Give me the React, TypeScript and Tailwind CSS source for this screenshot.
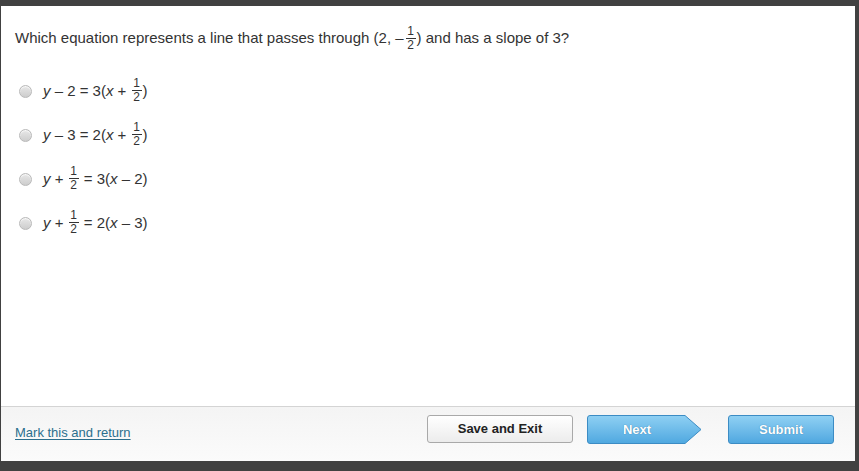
import React from "react";

const Frac: React.FC<{ neg?: boolean }> = ({ neg }) => (
  <span className="inline-flex items-center align-middle">
    {neg && <span className="mr-[1px]">–</span>}
    <span className="inline-flex flex-col items-center text-[12px] leading-[11px] -mt-[1px] mx-[1px]">
      <span className="px-[1px]">1</span>
      <span className="block w-[10px] border-t border-[#333] my-[1px]" />
      <span className="px-[1px]">2</span>
    </span>
  </span>
);

const Radio = () => (
  <span className="shrink-0 inline-block w-[13px] h-[13px] rounded-full border border-[#b9b9b9] bg-gradient-to-b from-[#e8e8e8] to-[#cdcdcd] shadow-[inset_0_1px_1px_rgba(255,255,255,0.8)]" />
);

const Option: React.FC<{ children: React.ReactNode }> = ({ children }) => (
  <div className="flex items-center h-[44px]">
    <div className="shrink-0 w-[42px] pl-[18px] flex items-center">
      <Radio />
    </div>
    <div className="flex items-center whitespace-pre">{children}</div>
  </div>
);

const I: React.FC<{ children: React.ReactNode }> = ({ children }) => (
  <i className="italic">{children}</i>
);

export default function App() {
  return (
    <div
      className="w-[859px] h-[471px] bg-[#414141] pt-[6px] pl-[1px] pr-[4px] pb-[10px] flex"
      style={{ fontFamily: '"Liberation Sans", Arial, sans-serif' }}
    >
      <div className="flex-1 bg-white flex flex-col text-[#333] text-[15px]">
        {/* QUESTION */}
        <div className="flex-1">
          <div className="pl-[14px] pt-[19px] h-[46px] flex items-center whitespace-pre">
            Which equation represents a line that passes through (2, <Frac neg />) and has a slope of 3?
          </div>
          <div className="mt-[17px]">
            <Option>
              <I>y</I> – 2 = 3(<I>x</I> + <Frac />)
            </Option>
            <Option>
              <I>y</I> – 3 = 2(<I>x</I> + <Frac />)
            </Option>
            <Option>
              <I>y</I> + <Frac /> = 3(<I>x</I> – 2)
            </Option>
            <Option>
              <I>y</I> + <Frac /> = 2(<I>x</I> – 3)
            </Option>
          </div>
        </div>

        {/* FOOTER */}
        <div className="h-[55px] border-t border-[#d4d4d4] bg-gradient-to-b from-[#f4f4f4] to-[#fbfbfb] flex items-start pt-[8px] pl-[14px] pr-[21px]">
          <a
            href="#"
            className="mt-[8px] text-[13px] text-[#2b6f8d] underline underline-offset-2"
          >
            Mark this and return
          </a>
          <div className="ml-auto flex items-start">
            <button className="w-[146px] h-[28px] rounded-[3px] border border-[#a9a9a9] bg-gradient-to-b from-[#ffffff] to-[#ececec] text-[13px] font-bold text-[#222]">
              Save and Exit
            </button>
            <div className="relative w-[115px] h-[29px] ml-[14px]">
              <svg className="absolute inset-0" width="115" height="29" viewBox="0 0 115 29">
                <defs>
                  <linearGradient id="nb" x1="0" y1="0" x2="0" y2="1">
                    <stop offset="0" stopColor="#8fd0f3" />
                    <stop offset="1" stopColor="#4fa8e0" />
                  </linearGradient>
                </defs>
                <path
                  d="M3 0.5 H98 L114 14.5 L98 28.5 H3 Q0.5 28.5 0.5 26 V3 Q0.5 0.5 3 0.5 Z"
                  fill="url(#nb)"
                  stroke="#3c8cc4"
                />
              </svg>
              <span className="absolute left-0 top-0 w-[100px] h-full flex items-center justify-center text-[13px] font-bold text-white [text-shadow:0_0_1px_#2b6e9c]">
                Next
              </span>
            </div>
            <button className="ml-[26px] w-[106px] h-[29px] rounded-[3px] border border-[#3c8cc4] bg-gradient-to-b from-[#8fd0f3] to-[#4fa8e0] text-[13px] font-bold text-white [text-shadow:0_0_1px_#2b6e9c]">
              Submit
            </button>
          </div>
        </div>
      </div>
    </div>
  );
}
